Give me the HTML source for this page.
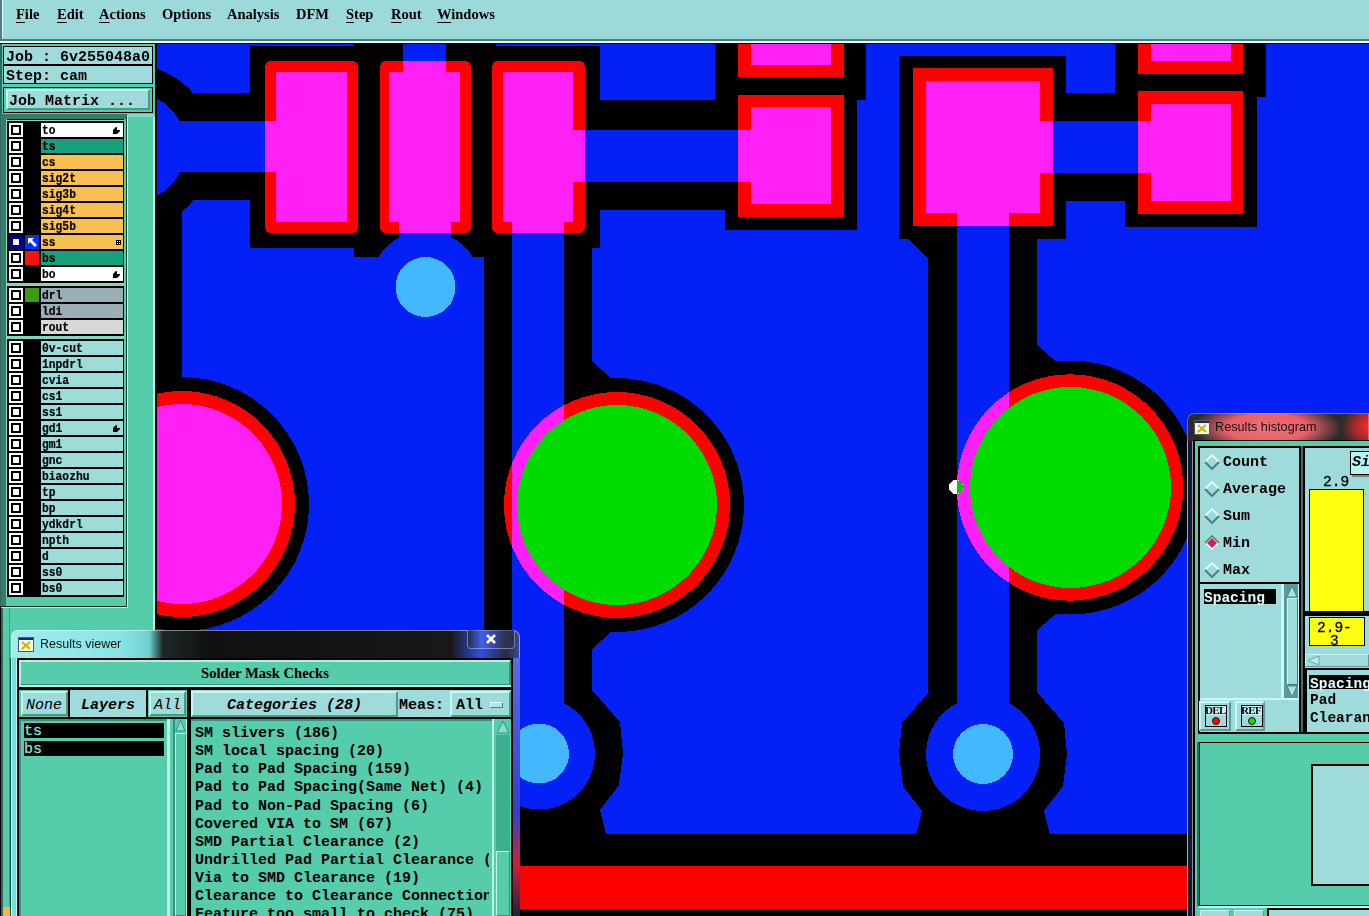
<!DOCTYPE html>
<html><head><meta charset="utf-8"><style>
html,body{margin:0;padding:0;width:1369px;height:916px;overflow:hidden;background:#000;position:relative}
div{box-sizing:content-box}
</style></head><body>
<div style="position:absolute;left:0px;top:0px;width:1369px;height:39px;background:#9cdada;"></div>
<div style="position:absolute;left:0px;top:0px;width:2px;height:44px;background:#4f8080;"></div>
<div style="position:absolute;left:2px;top:0px;width:1px;height:39px;background:#e8ffff;"></div>
<div style="position:absolute;left:0px;top:39px;width:1369px;height:2px;background:#4c7c7a;"></div>
<div style="position:absolute;left:0px;top:41px;width:1369px;height:2px;background:#f0ffff;"></div>
<div style="position:absolute;left:0px;top:43px;width:1369px;height:1px;background:#000;"></div>
<div style="position:absolute;left:16px;top:7px;font:bold 14.5px 'Liberation Serif', serif;color:#000;white-space:pre;line-height:1;"><span style="text-decoration:underline;text-underline-offset:3px">F</span>ile</div>
<div style="position:absolute;left:57px;top:7px;font:bold 14.5px 'Liberation Serif', serif;color:#000;white-space:pre;line-height:1;"><span style="text-decoration:underline;text-underline-offset:3px">E</span>dit</div>
<div style="position:absolute;left:99px;top:7px;font:bold 14.5px 'Liberation Serif', serif;color:#000;white-space:pre;line-height:1;"><span style="text-decoration:underline;text-underline-offset:3px">A</span>ctions</div>
<div style="position:absolute;left:162px;top:7px;font:bold 14.5px 'Liberation Serif', serif;color:#000;white-space:pre;line-height:1;">Options</div>
<div style="position:absolute;left:227px;top:7px;font:bold 14.5px 'Liberation Serif', serif;color:#000;white-space:pre;line-height:1;">Analysis</div>
<div style="position:absolute;left:296px;top:7px;font:bold 14.5px 'Liberation Serif', serif;color:#000;white-space:pre;line-height:1;">DFM</div>
<div style="position:absolute;left:346px;top:7px;font:bold 14.5px 'Liberation Serif', serif;color:#000;white-space:pre;line-height:1;"><span style="text-decoration:underline;text-underline-offset:3px">S</span>tep</div>
<div style="position:absolute;left:391px;top:7px;font:bold 14.5px 'Liberation Serif', serif;color:#000;white-space:pre;line-height:1;"><span style="text-decoration:underline;text-underline-offset:3px">R</span>out</div>
<div style="position:absolute;left:437px;top:7px;font:bold 14.5px 'Liberation Serif', serif;color:#000;white-space:pre;line-height:1;"><span style="text-decoration:underline;text-underline-offset:3px">W</span>indows</div>
<div style="position:absolute;left:0px;top:44px;width:156px;height:872px;background:#55cdab;"></div>
<div style="position:absolute;left:0px;top:44px;width:2px;height:872px;background:#2f6a60;"></div>
<div style="position:absolute;left:3px;top:46px;width:150px;height:38px;background:#000;"></div>
<div style="position:absolute;left:4px;top:47px;width:148px;height:17px;background:#9edbda;"></div>
<div style="position:absolute;left:4px;top:66px;width:148px;height:17px;background:#9edbda;"></div>
<div style="position:absolute;left:6px;top:50px;font:bold 15px 'Liberation Mono', monospace;color:#000;white-space:pre;line-height:1;">Job : 6v255048a0</div>
<div style="position:absolute;left:6px;top:69px;font:bold 15px 'Liberation Mono', monospace;color:#000;white-space:pre;line-height:1;">Step: cam</div>
<div style="position:absolute;left:3px;top:87px;width:150px;height:26px;background:#000;"></div>
<div style="position:absolute;left:4px;top:88px;width:148px;height:24px;background:#55cdab;"></div>
<div style="position:absolute;left:6px;top:89px;width:140px;height:17px;background:#9edbda;border:2px solid;border-color:#c8f8f4 #4a9a8a #4a9a8a #c8f8f4;"></div>
<div style="position:absolute;left:9px;top:94px;font:bold 15px 'Liberation Mono', monospace;color:#000;white-space:pre;line-height:1;">Job Matrix ...</div>
<div style="position:absolute;left:1px;top:114px;width:126px;height:5px;background:#3a7a6a;"></div>
<div style="position:absolute;left:127px;top:114px;width:28px;height:3px;background:#7ed8c8;"></div>
<div style="position:absolute;left:1px;top:119px;width:5px;height:487px;background:#3a7a6a;"></div>
<div style="position:absolute;left:0px;top:606px;width:3px;height:310px;background:#2f6a60;"></div>
<div style="position:absolute;left:0px;top:606px;width:1px;height:310px;background:#000;"></div>
<div style="position:absolute;left:9px;top:608px;width:1px;height:308px;background:#3f9a80;"></div>
<div style="position:absolute;left:6px;top:119px;width:1px;height:478px;background:#80d8c0;"></div>
<div style="position:absolute;left:7px;top:119px;width:117px;height:478px;background:#000;"></div>
<div style="position:absolute;left:124px;top:119px;width:2px;height:478px;background:#55cdab;"></div>
<div style="position:absolute;left:126px;top:117px;width:1px;height:490px;background:#1a3a30;"></div>
<div style="position:absolute;left:127px;top:117px;width:1px;height:490px;background:#c8f8f0;"></div>
<div style="position:absolute;left:153px;top:117px;width:2px;height:799px;background:#b8f0e0;"></div>
<div style="position:absolute;left:155px;top:44px;width:1px;height:872px;background:#000;"></div>
<div style="position:absolute;left:7px;top:120px;width:117px;height:1px;background:#80d8c0;"></div>
<div style="position:absolute;left:7px;top:283px;width:117px;height:3px;background:#80d8c0;"></div>
<div style="position:absolute;left:7px;top:336px;width:117px;height:3px;background:#80d8c0;"></div>
<div style="position:absolute;left:9px;top:123px;width:14px;height:14px;background:#fff;"></div>
<div style="position:absolute;left:11px;top:125px;width:10px;height:10px;background:#000;"></div>
<div style="position:absolute;left:13px;top:127px;width:6px;height:6px;background:#fff;"></div>
<div style="position:absolute;left:41px;top:123px;width:82px;height:14px;background:#ffffff;"></div>
<div style="position:absolute;left:42px;top:123.5px;font:bold 13px 'Liberation Mono', monospace;color:#000;white-space:pre;line-height:1;transform:scaleX(0.87);transform-origin:0 0;-webkit-text-stroke:0.2px #000">to</div>
<svg style="position:absolute;left:113px;top:127px" width="8" height="8"><path d="M0,3 L2,1 L3,0 L4,0 L4,3 L7,3 L7,4 L4,7 L0,7 Z" fill="#000"/></svg>
<div style="position:absolute;left:9px;top:139px;width:14px;height:14px;background:#fff;"></div>
<div style="position:absolute;left:11px;top:141px;width:10px;height:10px;background:#000;"></div>
<div style="position:absolute;left:13px;top:143px;width:6px;height:6px;background:#fff;"></div>
<div style="position:absolute;left:41px;top:139px;width:82px;height:14px;background:#17a07c;"></div>
<div style="position:absolute;left:42px;top:139.5px;font:bold 13px 'Liberation Mono', monospace;color:#000;white-space:pre;line-height:1;transform:scaleX(0.87);transform-origin:0 0;-webkit-text-stroke:0.2px #000">ts</div>
<div style="position:absolute;left:9px;top:155px;width:14px;height:14px;background:#fff;"></div>
<div style="position:absolute;left:11px;top:157px;width:10px;height:10px;background:#000;"></div>
<div style="position:absolute;left:13px;top:159px;width:6px;height:6px;background:#fff;"></div>
<div style="position:absolute;left:41px;top:155px;width:82px;height:14px;background:#f8c050;"></div>
<div style="position:absolute;left:42px;top:155.5px;font:bold 13px 'Liberation Mono', monospace;color:#000;white-space:pre;line-height:1;transform:scaleX(0.87);transform-origin:0 0;-webkit-text-stroke:0.2px #000">cs</div>
<div style="position:absolute;left:9px;top:171px;width:14px;height:14px;background:#fff;"></div>
<div style="position:absolute;left:11px;top:173px;width:10px;height:10px;background:#000;"></div>
<div style="position:absolute;left:13px;top:175px;width:6px;height:6px;background:#fff;"></div>
<div style="position:absolute;left:41px;top:171px;width:82px;height:14px;background:#f8c050;"></div>
<div style="position:absolute;left:42px;top:171.5px;font:bold 13px 'Liberation Mono', monospace;color:#000;white-space:pre;line-height:1;transform:scaleX(0.87);transform-origin:0 0;-webkit-text-stroke:0.2px #000">sig2t</div>
<div style="position:absolute;left:9px;top:187px;width:14px;height:14px;background:#fff;"></div>
<div style="position:absolute;left:11px;top:189px;width:10px;height:10px;background:#000;"></div>
<div style="position:absolute;left:13px;top:191px;width:6px;height:6px;background:#fff;"></div>
<div style="position:absolute;left:41px;top:187px;width:82px;height:14px;background:#f8c050;"></div>
<div style="position:absolute;left:42px;top:187.5px;font:bold 13px 'Liberation Mono', monospace;color:#000;white-space:pre;line-height:1;transform:scaleX(0.87);transform-origin:0 0;-webkit-text-stroke:0.2px #000">sig3b</div>
<div style="position:absolute;left:9px;top:203px;width:14px;height:14px;background:#fff;"></div>
<div style="position:absolute;left:11px;top:205px;width:10px;height:10px;background:#000;"></div>
<div style="position:absolute;left:13px;top:207px;width:6px;height:6px;background:#fff;"></div>
<div style="position:absolute;left:41px;top:203px;width:82px;height:14px;background:#f8c050;"></div>
<div style="position:absolute;left:42px;top:203.5px;font:bold 13px 'Liberation Mono', monospace;color:#000;white-space:pre;line-height:1;transform:scaleX(0.87);transform-origin:0 0;-webkit-text-stroke:0.2px #000">sig4t</div>
<div style="position:absolute;left:9px;top:219px;width:14px;height:14px;background:#fff;"></div>
<div style="position:absolute;left:11px;top:221px;width:10px;height:10px;background:#000;"></div>
<div style="position:absolute;left:13px;top:223px;width:6px;height:6px;background:#fff;"></div>
<div style="position:absolute;left:41px;top:219px;width:82px;height:14px;background:#f8c050;"></div>
<div style="position:absolute;left:42px;top:219.5px;font:bold 13px 'Liberation Mono', monospace;color:#000;white-space:pre;line-height:1;transform:scaleX(0.87);transform-origin:0 0;-webkit-text-stroke:0.2px #000">sig5b</div>
<div style="position:absolute;left:9px;top:235px;width:14px;height:14px;background:#000088;"></div>
<div style="position:absolute;left:13px;top:239px;width:6px;height:6px;background:#fff;"></div>
<div style="position:absolute;left:25px;top:235px;width:14px;height:14px;background:#0a30ff;"></div>
<svg style="position:absolute;left:25px;top:235px" width="14" height="14"><path d="M3,3 L9,3 L7,5 L12,10 L10,12 L5,7 L3,9 Z" fill="#fff"/></svg>
<div style="position:absolute;left:41px;top:235px;width:82px;height:14px;background:#f8c050;"></div>
<div style="position:absolute;left:42px;top:235.5px;font:bold 13px 'Liberation Mono', monospace;color:#000;white-space:pre;line-height:1;transform:scaleX(0.87);transform-origin:0 0;-webkit-text-stroke:0.2px #000">ss</div>
<svg style="position:absolute;left:116px;top:240px" width="5" height="5" shape-rendering="crispEdges"><rect width="5" height="5" fill="#000"/><rect x="1" y="1" width="1" height="1" fill="#fff"/><rect x="3" y="1" width="1" height="1" fill="#fff"/><rect x="1" y="3" width="1" height="1" fill="#fff"/><rect x="3" y="3" width="1" height="1" fill="#fff"/></svg>
<div style="position:absolute;left:9px;top:251px;width:14px;height:14px;background:#fff;"></div>
<div style="position:absolute;left:11px;top:253px;width:10px;height:10px;background:#000;"></div>
<div style="position:absolute;left:13px;top:255px;width:6px;height:6px;background:#fff;"></div>
<div style="position:absolute;left:25px;top:251px;width:14px;height:14px;background:#ff1010;"></div>
<div style="position:absolute;left:41px;top:251px;width:82px;height:14px;background:#17a07c;"></div>
<div style="position:absolute;left:42px;top:251.5px;font:bold 13px 'Liberation Mono', monospace;color:#000;white-space:pre;line-height:1;transform:scaleX(0.87);transform-origin:0 0;-webkit-text-stroke:0.2px #000">bs</div>
<div style="position:absolute;left:9px;top:267px;width:14px;height:14px;background:#fff;"></div>
<div style="position:absolute;left:11px;top:269px;width:10px;height:10px;background:#000;"></div>
<div style="position:absolute;left:13px;top:271px;width:6px;height:6px;background:#fff;"></div>
<div style="position:absolute;left:41px;top:267px;width:82px;height:14px;background:#ffffff;"></div>
<div style="position:absolute;left:42px;top:267.5px;font:bold 13px 'Liberation Mono', monospace;color:#000;white-space:pre;line-height:1;transform:scaleX(0.87);transform-origin:0 0;-webkit-text-stroke:0.2px #000">bo</div>
<svg style="position:absolute;left:113px;top:271px" width="8" height="8"><path d="M0,3 L2,1 L3,0 L4,0 L4,3 L7,3 L7,4 L4,7 L0,7 Z" fill="#000"/></svg>
<div style="position:absolute;left:9px;top:288px;width:14px;height:14px;background:#fff;"></div>
<div style="position:absolute;left:11px;top:290px;width:10px;height:10px;background:#000;"></div>
<div style="position:absolute;left:13px;top:292px;width:6px;height:6px;background:#fff;"></div>
<div style="position:absolute;left:25px;top:288px;width:14px;height:14px;background:#3c9c10;"></div>
<div style="position:absolute;left:41px;top:288px;width:82px;height:14px;background:#9aaeb6;"></div>
<div style="position:absolute;left:42px;top:288.5px;font:bold 13px 'Liberation Mono', monospace;color:#000;white-space:pre;line-height:1;transform:scaleX(0.87);transform-origin:0 0;-webkit-text-stroke:0.2px #000">drl</div>
<div style="position:absolute;left:9px;top:304px;width:14px;height:14px;background:#fff;"></div>
<div style="position:absolute;left:11px;top:306px;width:10px;height:10px;background:#000;"></div>
<div style="position:absolute;left:13px;top:308px;width:6px;height:6px;background:#fff;"></div>
<div style="position:absolute;left:41px;top:304px;width:82px;height:14px;background:#9aaeb6;"></div>
<div style="position:absolute;left:42px;top:304.5px;font:bold 13px 'Liberation Mono', monospace;color:#000;white-space:pre;line-height:1;transform:scaleX(0.87);transform-origin:0 0;-webkit-text-stroke:0.2px #000">ldi</div>
<div style="position:absolute;left:9px;top:320px;width:14px;height:14px;background:#fff;"></div>
<div style="position:absolute;left:11px;top:322px;width:10px;height:10px;background:#000;"></div>
<div style="position:absolute;left:13px;top:324px;width:6px;height:6px;background:#fff;"></div>
<div style="position:absolute;left:41px;top:320px;width:82px;height:14px;background:#d8d8d8;"></div>
<div style="position:absolute;left:42px;top:320.5px;font:bold 13px 'Liberation Mono', monospace;color:#000;white-space:pre;line-height:1;transform:scaleX(0.87);transform-origin:0 0;-webkit-text-stroke:0.2px #000">rout</div>
<div style="position:absolute;left:9px;top:341px;width:14px;height:14px;background:#fff;"></div>
<div style="position:absolute;left:11px;top:343px;width:10px;height:10px;background:#000;"></div>
<div style="position:absolute;left:13px;top:345px;width:6px;height:6px;background:#fff;"></div>
<div style="position:absolute;left:41px;top:341px;width:82px;height:14px;background:#9edcda;"></div>
<div style="position:absolute;left:42px;top:341.5px;font:bold 13px 'Liberation Mono', monospace;color:#000;white-space:pre;line-height:1;transform:scaleX(0.87);transform-origin:0 0;-webkit-text-stroke:0.2px #000">0v-cut</div>
<div style="position:absolute;left:9px;top:357px;width:14px;height:14px;background:#fff;"></div>
<div style="position:absolute;left:11px;top:359px;width:10px;height:10px;background:#000;"></div>
<div style="position:absolute;left:13px;top:361px;width:6px;height:6px;background:#fff;"></div>
<div style="position:absolute;left:41px;top:357px;width:82px;height:14px;background:#9edcda;"></div>
<div style="position:absolute;left:42px;top:357.5px;font:bold 13px 'Liberation Mono', monospace;color:#000;white-space:pre;line-height:1;transform:scaleX(0.87);transform-origin:0 0;-webkit-text-stroke:0.2px #000">1npdrl</div>
<div style="position:absolute;left:9px;top:373px;width:14px;height:14px;background:#fff;"></div>
<div style="position:absolute;left:11px;top:375px;width:10px;height:10px;background:#000;"></div>
<div style="position:absolute;left:13px;top:377px;width:6px;height:6px;background:#fff;"></div>
<div style="position:absolute;left:41px;top:373px;width:82px;height:14px;background:#9edcda;"></div>
<div style="position:absolute;left:42px;top:373.5px;font:bold 13px 'Liberation Mono', monospace;color:#000;white-space:pre;line-height:1;transform:scaleX(0.87);transform-origin:0 0;-webkit-text-stroke:0.2px #000">cvia</div>
<div style="position:absolute;left:9px;top:389px;width:14px;height:14px;background:#fff;"></div>
<div style="position:absolute;left:11px;top:391px;width:10px;height:10px;background:#000;"></div>
<div style="position:absolute;left:13px;top:393px;width:6px;height:6px;background:#fff;"></div>
<div style="position:absolute;left:41px;top:389px;width:82px;height:14px;background:#9edcda;"></div>
<div style="position:absolute;left:42px;top:389.5px;font:bold 13px 'Liberation Mono', monospace;color:#000;white-space:pre;line-height:1;transform:scaleX(0.87);transform-origin:0 0;-webkit-text-stroke:0.2px #000">cs1</div>
<div style="position:absolute;left:9px;top:405px;width:14px;height:14px;background:#fff;"></div>
<div style="position:absolute;left:11px;top:407px;width:10px;height:10px;background:#000;"></div>
<div style="position:absolute;left:13px;top:409px;width:6px;height:6px;background:#fff;"></div>
<div style="position:absolute;left:41px;top:405px;width:82px;height:14px;background:#9edcda;"></div>
<div style="position:absolute;left:42px;top:405.5px;font:bold 13px 'Liberation Mono', monospace;color:#000;white-space:pre;line-height:1;transform:scaleX(0.87);transform-origin:0 0;-webkit-text-stroke:0.2px #000">ss1</div>
<div style="position:absolute;left:9px;top:421px;width:14px;height:14px;background:#fff;"></div>
<div style="position:absolute;left:11px;top:423px;width:10px;height:10px;background:#000;"></div>
<div style="position:absolute;left:13px;top:425px;width:6px;height:6px;background:#fff;"></div>
<div style="position:absolute;left:41px;top:421px;width:82px;height:14px;background:#9edcda;"></div>
<div style="position:absolute;left:42px;top:421.5px;font:bold 13px 'Liberation Mono', monospace;color:#000;white-space:pre;line-height:1;transform:scaleX(0.87);transform-origin:0 0;-webkit-text-stroke:0.2px #000">gd1</div>
<svg style="position:absolute;left:113px;top:425px" width="8" height="8"><path d="M0,3 L2,1 L3,0 L4,0 L4,3 L7,3 L7,4 L4,7 L0,7 Z" fill="#000"/></svg>
<div style="position:absolute;left:9px;top:437px;width:14px;height:14px;background:#fff;"></div>
<div style="position:absolute;left:11px;top:439px;width:10px;height:10px;background:#000;"></div>
<div style="position:absolute;left:13px;top:441px;width:6px;height:6px;background:#fff;"></div>
<div style="position:absolute;left:41px;top:437px;width:82px;height:14px;background:#9edcda;"></div>
<div style="position:absolute;left:42px;top:437.5px;font:bold 13px 'Liberation Mono', monospace;color:#000;white-space:pre;line-height:1;transform:scaleX(0.87);transform-origin:0 0;-webkit-text-stroke:0.2px #000">gm1</div>
<div style="position:absolute;left:9px;top:453px;width:14px;height:14px;background:#fff;"></div>
<div style="position:absolute;left:11px;top:455px;width:10px;height:10px;background:#000;"></div>
<div style="position:absolute;left:13px;top:457px;width:6px;height:6px;background:#fff;"></div>
<div style="position:absolute;left:41px;top:453px;width:82px;height:14px;background:#9edcda;"></div>
<div style="position:absolute;left:42px;top:453.5px;font:bold 13px 'Liberation Mono', monospace;color:#000;white-space:pre;line-height:1;transform:scaleX(0.87);transform-origin:0 0;-webkit-text-stroke:0.2px #000">gnc</div>
<div style="position:absolute;left:9px;top:469px;width:14px;height:14px;background:#fff;"></div>
<div style="position:absolute;left:11px;top:471px;width:10px;height:10px;background:#000;"></div>
<div style="position:absolute;left:13px;top:473px;width:6px;height:6px;background:#fff;"></div>
<div style="position:absolute;left:41px;top:469px;width:82px;height:14px;background:#9edcda;"></div>
<div style="position:absolute;left:42px;top:469.5px;font:bold 13px 'Liberation Mono', monospace;color:#000;white-space:pre;line-height:1;transform:scaleX(0.87);transform-origin:0 0;-webkit-text-stroke:0.2px #000">biaozhu</div>
<div style="position:absolute;left:9px;top:485px;width:14px;height:14px;background:#fff;"></div>
<div style="position:absolute;left:11px;top:487px;width:10px;height:10px;background:#000;"></div>
<div style="position:absolute;left:13px;top:489px;width:6px;height:6px;background:#fff;"></div>
<div style="position:absolute;left:41px;top:485px;width:82px;height:14px;background:#9edcda;"></div>
<div style="position:absolute;left:42px;top:485.5px;font:bold 13px 'Liberation Mono', monospace;color:#000;white-space:pre;line-height:1;transform:scaleX(0.87);transform-origin:0 0;-webkit-text-stroke:0.2px #000">tp</div>
<div style="position:absolute;left:9px;top:501px;width:14px;height:14px;background:#fff;"></div>
<div style="position:absolute;left:11px;top:503px;width:10px;height:10px;background:#000;"></div>
<div style="position:absolute;left:13px;top:505px;width:6px;height:6px;background:#fff;"></div>
<div style="position:absolute;left:41px;top:501px;width:82px;height:14px;background:#9edcda;"></div>
<div style="position:absolute;left:42px;top:501.5px;font:bold 13px 'Liberation Mono', monospace;color:#000;white-space:pre;line-height:1;transform:scaleX(0.87);transform-origin:0 0;-webkit-text-stroke:0.2px #000">bp</div>
<div style="position:absolute;left:9px;top:517px;width:14px;height:14px;background:#fff;"></div>
<div style="position:absolute;left:11px;top:519px;width:10px;height:10px;background:#000;"></div>
<div style="position:absolute;left:13px;top:521px;width:6px;height:6px;background:#fff;"></div>
<div style="position:absolute;left:41px;top:517px;width:82px;height:14px;background:#9edcda;"></div>
<div style="position:absolute;left:42px;top:517.5px;font:bold 13px 'Liberation Mono', monospace;color:#000;white-space:pre;line-height:1;transform:scaleX(0.87);transform-origin:0 0;-webkit-text-stroke:0.2px #000">ydkdrl</div>
<div style="position:absolute;left:9px;top:533px;width:14px;height:14px;background:#fff;"></div>
<div style="position:absolute;left:11px;top:535px;width:10px;height:10px;background:#000;"></div>
<div style="position:absolute;left:13px;top:537px;width:6px;height:6px;background:#fff;"></div>
<div style="position:absolute;left:41px;top:533px;width:82px;height:14px;background:#9edcda;"></div>
<div style="position:absolute;left:42px;top:533.5px;font:bold 13px 'Liberation Mono', monospace;color:#000;white-space:pre;line-height:1;transform:scaleX(0.87);transform-origin:0 0;-webkit-text-stroke:0.2px #000">npth</div>
<div style="position:absolute;left:9px;top:549px;width:14px;height:14px;background:#fff;"></div>
<div style="position:absolute;left:11px;top:551px;width:10px;height:10px;background:#000;"></div>
<div style="position:absolute;left:13px;top:553px;width:6px;height:6px;background:#fff;"></div>
<div style="position:absolute;left:41px;top:549px;width:82px;height:14px;background:#9edcda;"></div>
<div style="position:absolute;left:42px;top:549.5px;font:bold 13px 'Liberation Mono', monospace;color:#000;white-space:pre;line-height:1;transform:scaleX(0.87);transform-origin:0 0;-webkit-text-stroke:0.2px #000">d</div>
<div style="position:absolute;left:9px;top:565px;width:14px;height:14px;background:#fff;"></div>
<div style="position:absolute;left:11px;top:567px;width:10px;height:10px;background:#000;"></div>
<div style="position:absolute;left:13px;top:569px;width:6px;height:6px;background:#fff;"></div>
<div style="position:absolute;left:41px;top:565px;width:82px;height:14px;background:#9edcda;"></div>
<div style="position:absolute;left:42px;top:565.5px;font:bold 13px 'Liberation Mono', monospace;color:#000;white-space:pre;line-height:1;transform:scaleX(0.87);transform-origin:0 0;-webkit-text-stroke:0.2px #000">ss0</div>
<div style="position:absolute;left:9px;top:581px;width:14px;height:14px;background:#fff;"></div>
<div style="position:absolute;left:11px;top:583px;width:10px;height:10px;background:#000;"></div>
<div style="position:absolute;left:13px;top:585px;width:6px;height:6px;background:#fff;"></div>
<div style="position:absolute;left:41px;top:581px;width:82px;height:14px;background:#9edcda;"></div>
<div style="position:absolute;left:42px;top:581.5px;font:bold 13px 'Liberation Mono', monospace;color:#000;white-space:pre;line-height:1;transform:scaleX(0.87);transform-origin:0 0;-webkit-text-stroke:0.2px #000">bs0</div>
<div style="position:absolute;left:1px;top:606px;width:126px;height:1px;background:#102820;"></div>
<div style="position:absolute;left:1px;top:607px;width:127px;height:1px;background:#a8f4e4;"></div>
<div style="position:absolute;left:3px;top:907px;width:7px;height:9px;background:#f0b840;"></div>
<svg width="1213" height="872" viewBox="156 44 1213 872" style="position:absolute;left:156px;top:44px;display:block" shape-rendering="crispEdges">
<rect x="156" y="44" width="1213" height="872" fill="#0320f6" />
<rect x="250" y="46" width="350" height="202" fill="#000" />
<rect x="354" y="44" width="142" height="2" fill="#000" />
<circle cx="130.6" cy="147" r="82.5" fill="#000"/>
<rect x="130" y="93" width="120" height="107" fill="#000" />
<circle cx="182" cy="504" r="127" fill="#000"/>
<rect x="156" y="147" width="26" height="253" fill="#000" />
<rect x="354" y="248" width="158" height="9" fill="#000" />
<rect x="484" y="257" width="28" height="577" fill="#000" />
<rect x="564" y="248" width="28" height="113" fill="#000" />
<polygon points="564,361 592,361 612,379 612,400 564,400" fill="#000"/>
<circle cx="617" cy="505" r="127" fill="#000"/>
<rect x="564" y="649" width="28" height="42" fill="#000" />
<polygon points="564,610 612,610 612,631 592,649 564,649" fill="#000"/>
<polygon points="485,691 593,691 620,722 623,753 619,785 600,810 606,834 472,834 478,810 459,785 455,753 458,722" fill="#000"/>
<rect x="600" y="100" width="257" height="110" fill="#000" />
<rect x="715" y="44" width="151" height="56" fill="#000" />
<rect x="725" y="210" width="132" height="20" fill="#000" />
<rect x="899" y="56" width="167" height="183" fill="#000" />
<polygon points="908,239 928,239 928,258" fill="#000"/>
<rect x="928" y="239" width="29" height="453" fill="#000" />
<rect x="1009" y="239" width="28" height="106" fill="#000" />
<polygon points="1009,345 1037,345 1058,363 1058,390 1009,390" fill="#000"/>
<circle cx="1070.5" cy="487.5" r="127" fill="#000"/>
<rect x="1009" y="630" width="28" height="62" fill="#000" />
<polygon points="1009,590 1058,590 1058,612 1037,630 1009,630" fill="#000"/>
<polygon points="929,692 1037,692 1064,723 1067,754 1063,786 1044,811 1050,835 916,835 922,811 903,786 899,754 902,723" fill="#000"/>
<rect x="1066" y="93" width="72" height="108" fill="#000" />
<rect x="1115" y="44" width="23" height="49" fill="#000" />
<rect x="1125" y="44" width="132" height="183" fill="#000" />
<rect x="1243" y="44" width="23" height="53" fill="#000" />
<rect x="156" y="834" width="1213" height="82" fill="#000" />
<circle cx="130.6" cy="147" r="55.4" fill="#0320f6"/>
<rect x="130" y="121" width="146" height="51" fill="#0320f6" />
<rect x="276" y="72" width="71" height="150" fill="#0320f6" />
<rect x="389" y="72" width="71" height="150" fill="#0320f6" />
<rect x="403" y="44" width="43" height="28" fill="#0320f6" />
<rect x="399" y="222" width="52" height="38" fill="#0320f6" />
<circle cx="425.5" cy="287" r="56" fill="#0320f6"/>
<rect x="503" y="72" width="70" height="150" fill="#0320f6" />
<rect x="573" y="130" width="178" height="52" fill="#0320f6" />
<rect x="512" y="222" width="52" height="532" fill="#0320f6" />
<rect x="751" y="107" width="80" height="97" fill="#0320f6" />
<rect x="751" y="44" width="80" height="21" fill="#0320f6" />
<rect x="926" y="81" width="114" height="132" fill="#0320f6" />
<rect x="1040" y="121" width="111" height="52" fill="#0320f6" />
<rect x="957" y="213" width="52" height="541" fill="#0320f6" />
<rect x="1151" y="104" width="80" height="97" fill="#0320f6" />
<rect x="1151" y="44" width="80" height="17" fill="#0320f6" />
<circle cx="182" cy="504" r="100" fill="#0320f6"/>
<circle cx="539" cy="753.5" r="56" fill="#0320f6"/>
<circle cx="983" cy="754" r="57" fill="#0320f6"/>
<g style="mix-blend-mode:lighten">
<rect x="265" y="61" width="93" height="172" fill="#ff0000" rx="6"/>
<rect x="380" y="61" width="91" height="172" fill="#ff0000" rx="6"/>
<rect x="492" y="61" width="93" height="172" fill="#ff0000" rx="6"/>
<rect x="738" y="95" width="106" height="122" fill="#ff0000" />
<rect x="738" y="44" width="106" height="33" fill="#ff0000" />
<rect x="913" y="68" width="140" height="158" fill="#ff0000" />
<rect x="1138" y="91" width="105" height="123" fill="#ff0000" />
<rect x="1138" y="44" width="105" height="30" fill="#ff0000" />
<circle cx="182" cy="504" r="113" fill="#ff0000"/>
<circle cx="617" cy="505" r="113" fill="#ff0000"/>
<circle cx="1070" cy="487.5" r="113.2" fill="#ff0000"/>
<rect x="156" y="866" width="1213" height="43" fill="#ff0000" />
</g>
<circle cx="425.5" cy="287" r="30" fill="#44b8ff"/>
<circle cx="539" cy="753.5" r="30" fill="#44b8ff"/>
<circle cx="983" cy="754" r="30" fill="#44b8ff"/>
<circle cx="617" cy="505" r="100" fill="#00dc00"/>
<circle cx="1070.5" cy="487.5" r="100.5" fill="#00dc00"/>
<circle cx="956" cy="487" r="7" fill="#fff"/><path d="M957,480.1 A7,7 0 0 1 957,493.9 Z" fill="#00c800"/>
<rect x="156" y="44" width="1" height="872" fill="#000" />
</svg>
<div style="position:absolute;left:11px;top:630px;width:509px;height:286px;border-radius:7px 7px 0 0;background:linear-gradient(90deg,#a0eeee 0px,#88e4e4 110px,#70d0d0 138px,#1c2828 152px,#101010 200px,#181818 440px,#3050e0 470px,#2a2a3a 495px,#3a4aa0 509px);box-shadow:inset 0 0 0 1px rgba(255,255,255,0.45)"></div>
<div style="position:absolute;left:10px;top:658px;width:8px;height:258px;background:linear-gradient(90deg,#1a5040 0px,#1a5040 1px,#d0ffff 1px,#d0ffff 2px,#72e2e2 2px,#68e0e0 6px,#c0fafa 6px,#c0fafa 7px,#103030 7px);"></div>
<div style="position:absolute;left:512px;top:658px;width:8px;height:258px;background:linear-gradient(180deg,#5a6ae8,#3040d0 60%,#d02040 80%,#202040);"></div>
<svg style="position:absolute;left:18px;top:637px" width="16" height="15"><rect x="0.5" y="0.5" width="15" height="14" fill="#f8f8e8" stroke="#555"/><rect x="1" y="1" width="14" height="2" fill="#202080"/><path d="M4,5 L12,12 M12,5 L4,12" stroke="#c8b800" stroke-width="2"/></svg>
<div style="position:absolute;left:40px;top:638px;font:12.5px 'Liberation Sans', sans-serif;color:#111;white-space:pre;line-height:1;">Results viewer</div>
<div style="position:absolute;left:467px;top:630px;width:46px;height:18px;border:1px solid rgba(200,200,255,0.5);border-top:none;border-radius:0 0 4px 4px;background:linear-gradient(90deg,rgba(40,40,40,0.6),rgba(80,110,255,0.5) 30%,rgba(40,40,50,0.6))"></div>
<svg style="position:absolute;left:485px;top:633px" width="12" height="12"><path d="M2,2 L10,10 M10,2 L2,10" stroke="#fff" stroke-width="2.6"/></svg>
<div style="position:absolute;left:18px;top:658px;width:495px;height:258px;background:#000;"></div>
<div style="position:absolute;left:19px;top:660px;width:492px;height:256px;background:#55cdab;"></div>
<div style="position:absolute;left:19px;top:660px;width:488px;height:22px;background:#55cdab;border:2px solid;border-color:#b4f0e6 #3c9080 #3c9080 #b4f0e6;"></div>
<div style="position:absolute;left:19px;top:666px;font:bold 14.6px 'Liberation Serif', serif;color:#000;white-space:pre;line-height:1;width:492px;text-align:center">Solder Mask Checks</div>
<div style="position:absolute;left:19px;top:685px;width:492px;height:2px;background:#b4f0e6;"></div>
<div style="position:absolute;left:19px;top:687px;width:492px;height:3px;background:#000;"></div>
<div style="position:absolute;left:19px;top:690px;width:492px;height:27px;background:#9edbda;"></div>
<div style="position:absolute;left:19px;top:690px;width:49px;height:27px;background:#55cdab;"></div>
<div style="position:absolute;left:21px;top:691px;width:43px;height:21px;background:#9edbda;border:2px solid;border-color:#c8f8f4 #4a9a8a #4a9a8a #c8f8f4;"></div>
<div style="position:absolute;left:26px;top:698px;font:italic 15px 'Liberation Mono', monospace;color:#000;white-space:pre;line-height:1;">None</div>
<div style="position:absolute;left:68px;top:690px;width:2px;height:27px;background:#000;"></div>
<div style="position:absolute;left:81px;top:698px;font:bold italic 15px 'Liberation Mono', monospace;color:#000;white-space:pre;line-height:1;">Layers</div>
<div style="position:absolute;left:146px;top:690px;width:2px;height:27px;background:#000;"></div>
<div style="position:absolute;left:148px;top:690px;width:39px;height:27px;background:#55cdab;"></div>
<div style="position:absolute;left:149px;top:691px;width:33px;height:21px;background:#9edbda;border:2px solid;border-color:#c8f8f4 #4a9a8a #4a9a8a #c8f8f4;"></div>
<div style="position:absolute;left:154px;top:698px;font:italic 15px 'Liberation Mono', monospace;color:#000;white-space:pre;line-height:1;">All</div>
<div style="position:absolute;left:187px;top:690px;width:4px;height:226px;background:#000;"></div>
<div style="position:absolute;left:191px;top:690px;width:320px;height:27px;background:#9edbda;"></div>
<div style="position:absolute;left:191px;top:691px;width:203px;height:22px;background:#9edbda;border:2px solid;border-color:#c8f8f4 #4a9a8a #4a9a8a #c8f8f4;"></div>
<div style="position:absolute;left:227px;top:698px;font:bold italic 15px 'Liberation Mono', monospace;color:#000;white-space:pre;line-height:1;">Categories (28)</div>
<div style="position:absolute;left:399px;top:698px;font:bold 15px 'Liberation Mono', monospace;color:#000;white-space:pre;line-height:1;">Meas:</div>
<div style="position:absolute;left:450px;top:691px;width:57px;height:22px;background:#9edbda;border:2px solid;border-color:#c8f8f4 #4a9a8a #4a9a8a #c8f8f4;"></div>
<div style="position:absolute;left:456px;top:698px;font:bold 15px 'Liberation Mono', monospace;color:#000;white-space:pre;line-height:1;">All</div>
<div style="position:absolute;left:490px;top:702px;width:11px;height:4px;background:#b0e8e8;border:1px solid;border-color:#e8ffff #3a8a7a #3a8a7a #e8ffff;"></div>
<div style="position:absolute;left:19px;top:717px;width:172px;height:2px;background:#000;"></div>
<div style="position:absolute;left:191px;top:717px;width:320px;height:2px;background:#000;"></div>
<div style="position:absolute;left:19px;top:719px;width:168px;height:197px;background:#55cdab;"></div>
<div style="position:absolute;left:19px;top:719px;width:150px;height:2px;background:#3a9080;"></div>
<div style="position:absolute;left:19px;top:719px;width:2px;height:197px;background:#3a9080;"></div>
<div style="position:absolute;left:167px;top:719px;width:3px;height:197px;background:#b8f4e8;"></div>
<div style="position:absolute;left:173px;top:719px;width:2px;height:197px;background:#3a9080;"></div>
<div style="position:absolute;left:186px;top:719px;width:1px;height:197px;background:#b8f4e8;"></div>
<svg style="position:absolute;left:175px;top:719px" width="11" height="14"><polygon points="5.5,1 1,12 10,12" fill="#7fe0d0" stroke="#3a9080"/></svg>
<div style="position:absolute;left:175px;top:733px;width:9px;height:181px;background:#55cdab;border:1px solid;border-color:#c0f8ec #3a9080 #3a9080 #c0f8ec;"></div>
<div style="position:absolute;left:24px;top:723px;width:140px;height:15px;background:#000;"></div>
<div style="position:absolute;left:24px;top:741px;width:140px;height:15px;background:#000;"></div>
<div style="position:absolute;left:24px;top:724px;font:15px 'Liberation Mono', monospace;color:#8ee8d0;white-space:pre;line-height:1;-webkit-text-stroke:0.25px #8ee8d0">ts</div>
<div style="position:absolute;left:24px;top:742px;font:15px 'Liberation Mono', monospace;color:#8ee8d0;white-space:pre;line-height:1;-webkit-text-stroke:0.25px #8ee8d0">bs</div>
<div style="position:absolute;left:191px;top:719px;width:320px;height:2px;background:#3a9080;"></div>
<div style="position:absolute;left:492px;top:719px;width:2px;height:197px;background:#b8f4e8;"></div>
<div style="position:absolute;left:494px;top:719px;width:17px;height:197px;background:#55cdab;"></div>
<div style="position:absolute;left:496px;top:735px;width:14px;height:116px;background:#3fae8e;"></div>
<svg style="position:absolute;left:496px;top:720px" width="14" height="15"><polygon points="7,1 1,13 13,13" fill="#7fe0d0" stroke="#3a9080"/></svg>
<div style="position:absolute;left:496px;top:851px;width:12px;height:63px;background:#55cdab;border:1px solid;border-color:#c0f8ec #3a9080 #3a9080 #c0f8ec;"></div>
<div style="position:absolute;left:192px;top:721px;width:297px;height:195px;overflow:hidden">
<div style="position:absolute;left:3px;top:5px;font:bold 15px 'Liberation Mono', monospace;color:#000;white-space:pre;line-height:1;">SM slivers (186)</div>
<div style="position:absolute;left:3px;top:23px;font:bold 15px 'Liberation Mono', monospace;color:#000;white-space:pre;line-height:1;">SM local spacing (20)</div>
<div style="position:absolute;left:3px;top:41px;font:bold 15px 'Liberation Mono', monospace;color:#000;white-space:pre;line-height:1;">Pad to Pad Spacing (159)</div>
<div style="position:absolute;left:3px;top:59px;font:bold 15px 'Liberation Mono', monospace;color:#000;white-space:pre;line-height:1;">Pad to Pad Spacing(Same Net) (4)</div>
<div style="position:absolute;left:3px;top:78px;font:bold 15px 'Liberation Mono', monospace;color:#000;white-space:pre;line-height:1;">Pad to Non-Pad Spacing (6)</div>
<div style="position:absolute;left:3px;top:96px;font:bold 15px 'Liberation Mono', monospace;color:#000;white-space:pre;line-height:1;">Covered VIA to SM (67)</div>
<div style="position:absolute;left:3px;top:114px;font:bold 15px 'Liberation Mono', monospace;color:#000;white-space:pre;line-height:1;">SMD Partial Clearance (2)</div>
<div style="position:absolute;left:3px;top:132px;font:bold 15px 'Liberation Mono', monospace;color:#000;white-space:pre;line-height:1;">Undrilled Pad Partial Clearance (5)</div>
<div style="position:absolute;left:3px;top:150px;font:bold 15px 'Liberation Mono', monospace;color:#000;white-space:pre;line-height:1;">Via to SMD Clearance (19)</div>
<div style="position:absolute;left:3px;top:168px;font:bold 15px 'Liberation Mono', monospace;color:#000;white-space:pre;line-height:1;">Clearance to Clearance Connection (3)</div>
<div style="position:absolute;left:3px;top:186px;font:bold 15px 'Liberation Mono', monospace;color:#000;white-space:pre;line-height:1;">Feature too small to check (75)</div>
</div>
<div style="position:absolute;left:1187px;top:413px;width:182px;height:503px;border-radius:7px 0 0 0;background:radial-gradient(ellipse 75px 26px at 80px 15px,#f47078 0%,#e86068 55%,rgba(40,40,40,0) 100%),radial-gradient(ellipse 28px 24px at 182px 14px,#ff2a2a 0%,rgba(255,40,40,0.6) 50%,rgba(40,40,40,0) 100%),#2a2a2a;box-shadow:inset 0 0 0 1px rgba(255,255,255,0.35)"></div>
<div style="position:absolute;left:1187px;top:441px;width:6px;height:475px;background:linear-gradient(90deg,#a0a8d0 0px,#a0a8d0 1px,#101838 1px,#141a30 5px,#909090 5px);"></div>
<svg style="position:absolute;left:1194px;top:420px" width="16" height="15"><rect x="0.5" y="0.5" width="15" height="14" fill="#f8f8e8" stroke="#555"/><rect x="1" y="1" width="14" height="2" fill="#202080"/><path d="M4,5 L12,12 M12,5 L4,12" stroke="#c8b800" stroke-width="2"/></svg>
<div style="position:absolute;left:1215px;top:421px;font:12.7px 'Liberation Sans', sans-serif;color:#111;white-space:pre;line-height:1;">Results histogram</div>
<div style="position:absolute;left:1193px;top:440px;width:176px;height:476px;background:#000;"></div>
<div style="position:absolute;left:1195px;top:441px;width:174px;height:475px;background:#55cdab;"></div>
<div style="position:absolute;left:1198px;top:446px;width:103px;height:288px;background:#000;"></div>
<div style="position:absolute;left:1200px;top:448px;width:99px;height:134px;background:#9edbda;"></div>
<svg style="position:absolute;left:1204px;top:454px" width="16" height="16"><path d="M1,8 L8,1 L15,8" stroke="#e0ffff" stroke-width="1.8" fill="none"/><path d="M1,8 L8,15 L15,8" stroke="#4a8080" stroke-width="2" fill="none"/></svg>
<div style="position:absolute;left:1223px;top:455px;font:bold 15px 'Liberation Mono', monospace;color:#000;white-space:pre;line-height:1;">Count</div>
<svg style="position:absolute;left:1204px;top:481px" width="16" height="16"><path d="M1,8 L8,1 L15,8" stroke="#e0ffff" stroke-width="1.8" fill="none"/><path d="M1,8 L8,15 L15,8" stroke="#4a8080" stroke-width="2" fill="none"/></svg>
<div style="position:absolute;left:1223px;top:482px;font:bold 15px 'Liberation Mono', monospace;color:#000;white-space:pre;line-height:1;">Average</div>
<svg style="position:absolute;left:1204px;top:508px" width="16" height="16"><path d="M1,8 L8,1 L15,8" stroke="#e0ffff" stroke-width="1.8" fill="none"/><path d="M1,8 L8,15 L15,8" stroke="#4a8080" stroke-width="2" fill="none"/></svg>
<div style="position:absolute;left:1223px;top:509px;font:bold 15px 'Liberation Mono', monospace;color:#000;white-space:pre;line-height:1;">Sum</div>
<svg style="position:absolute;left:1204px;top:535px" width="16" height="16"><polygon points="8,1 15,8 8,15 1,8" fill="#fff"/><polygon points="8,3 13,8 8,13 3,8" fill="#d0205a"/><path d="M1,8 L8,1 L15,8" stroke="#4a7a7a" stroke-width="1.6" fill="none"/></svg>
<div style="position:absolute;left:1223px;top:536px;font:bold 15px 'Liberation Mono', monospace;color:#000;white-space:pre;line-height:1;">Min</div>
<svg style="position:absolute;left:1204px;top:562px" width="16" height="16"><path d="M1,8 L8,1 L15,8" stroke="#e0ffff" stroke-width="1.8" fill="none"/><path d="M1,8 L8,15 L15,8" stroke="#4a8080" stroke-width="2" fill="none"/></svg>
<div style="position:absolute;left:1223px;top:563px;font:bold 15px 'Liberation Mono', monospace;color:#000;white-space:pre;line-height:1;">Max</div>
<div style="position:absolute;left:1200px;top:584px;width:99px;height:148px;background:#9edbda;"></div>
<div style="position:absolute;left:1281px;top:584px;width:3px;height:114px;background:#c8f8f4;"></div>
<div style="position:absolute;left:1284px;top:584px;width:15px;height:114px;background:#5a9a9a;"></div>
<div style="position:absolute;left:1298px;top:584px;width:1px;height:114px;background:#c8f8f4;"></div>
<svg style="position:absolute;left:1286px;top:585px" width="12" height="113"><polygon points="6,1 1,12 11,12" fill="#a8e4e4" stroke="#4a8a8a"/><polygon points="6,112 1,101 11,101" fill="#a8e4e4" stroke="#4a8a8a"/></svg>
<div style="position:absolute;left:1287px;top:598px;width:9px;height:85px;background:#9edbda;border:1px solid;border-color:#c8f8f4 #3a7a7a #3a7a7a #c8f8f4;"></div>
<div style="position:absolute;left:1200px;top:698px;width:99px;height:2px;background:#c8f8f4;"></div>
<div style="position:absolute;left:1204px;top:589px;width:72px;height:15px;background:#000;"></div>
<div style="position:absolute;left:1204px;top:591px;font:bold 14.5px 'Liberation Mono', monospace;color:#e8ffff;white-space:pre;line-height:1;">Spacing</div>
<div style="position:absolute;left:1199px;top:701px;width:28px;height:26px;background:#9edbda;border:2px solid;border-color:#c8f8f4 #5a9a9a #5a9a9a #c8f8f4;"></div>
<div style="position:absolute;left:1205px;top:705px;width:20px;height:20px;background:#a0dada;border:1px solid #000"></div>
<div style="position:absolute;left:1206px;top:706px;width:20px;height:9px;background:#c8f6f6;"></div>
<div style="position:absolute;left:1205px;top:705px;font:bold 11px 'Liberation Serif', serif;color:#000;white-space:pre;line-height:1;letter-spacing:-0.6px">DEL</div>
<div style="position:absolute;left:1212px;top:717px;width:6px;height:6px;border-radius:50%;background:#ee1010;border:1px solid #400"></div>
<div style="position:absolute;left:1235px;top:701px;width:26px;height:26px;background:#9edbda;border:2px solid;border-color:#c8f8f4 #5a9a9a #5a9a9a #c8f8f4;"></div>
<div style="position:absolute;left:1241px;top:705px;width:20px;height:20px;background:#a0dada;border:1px solid #000"></div>
<div style="position:absolute;left:1242px;top:706px;width:20px;height:9px;background:#c8f6f6;"></div>
<div style="position:absolute;left:1241px;top:705px;font:bold 11px 'Liberation Serif', serif;color:#000;white-space:pre;line-height:1;letter-spacing:-0.6px">REF</div>
<div style="position:absolute;left:1248px;top:717px;width:6px;height:6px;border-radius:50%;background:#10dd10;border:1px solid #400"></div>
<div style="position:absolute;left:1301px;top:446px;width:2px;height:288px;background:#4a6a6a;"></div>
<div style="position:absolute;left:1303px;top:446px;width:66px;height:288px;background:#000;"></div>
<div style="position:absolute;left:1305px;top:448px;width:64px;height:163px;background:#9edbda;"></div>
<div style="position:absolute;left:1350px;top:451px;width:19px;height:22px;background:#b2f6f6;border:1px solid #000;box-shadow:2px 2px 0 #6a8a8a"></div>
<div style="position:absolute;left:1352px;top:455px;font:bold italic 15px 'Liberation Mono', monospace;color:#000;white-space:pre;line-height:1;">Si</div>
<div style="position:absolute;left:1323px;top:475px;font:14.5px 'Liberation Mono', monospace;color:#000;white-space:pre;line-height:1;-webkit-text-stroke:0.3px #000">2.9</div>
<div style="position:absolute;left:1309px;top:489px;width:55px;height:123px;background:#ffff10;border:1px solid #000;box-sizing:border-box"></div>
<div style="position:absolute;left:1303px;top:612px;width:66px;height:4px;background:#000;"></div>
<div style="position:absolute;left:1305px;top:616px;width:64px;height:52px;background:#9edbda;"></div>
<div style="position:absolute;left:1309px;top:617px;width:56px;height:29px;background:#ffff10;border:1px solid #000;box-sizing:border-box"></div>
<div style="position:absolute;left:1317px;top:621px;font:14.5px 'Liberation Mono', monospace;color:#000;white-space:pre;line-height:1;-webkit-text-stroke:0.3px #000">2.9-</div>
<div style="position:absolute;left:1330px;top:634px;font:14.5px 'Liberation Mono', monospace;color:#000;white-space:pre;line-height:1;-webkit-text-stroke:0.3px #000">3</div>
<div style="position:absolute;left:1305px;top:654px;width:62px;height:11px;background:#9edbda;border:1px solid;border-color:#c8f8f4 #5a9a9a #5a9a9a #c8f8f4;"></div>
<svg style="position:absolute;left:1306px;top:654px" width="15" height="13"><polygon points="2,6.5 13,2 13,11" fill="#bdeeee" stroke="#6aaaaa"/></svg>
<div style="position:absolute;left:1305px;top:668px;width:64px;height:2px;background:#000;"></div>
<div style="position:absolute;left:1305px;top:670px;width:64px;height:62px;background:#9edbda;border-left:2px solid #000;box-sizing:border-box"></div>
<div style="position:absolute;left:1309px;top:675px;width:60px;height:14px;background:#000;"></div>
<div style="position:absolute;left:1310px;top:677px;font:bold 14.5px 'Liberation Mono', monospace;color:#e8ffff;white-space:pre;line-height:1;">Spacing</div>
<div style="position:absolute;left:1310px;top:693px;font:bold 14.5px 'Liberation Mono', monospace;color:#000;white-space:pre;line-height:1;">Pad</div>
<div style="position:absolute;left:1310px;top:711px;font:bold 14.5px 'Liberation Mono', monospace;color:#000;white-space:pre;line-height:1;">Clearance</div>
<div style="position:absolute;left:1198px;top:732px;width:171px;height:2px;background:#000;"></div>
<div style="position:absolute;left:1197px;top:742px;width:2px;height:164px;background:#2a7060;"></div>
<div style="position:absolute;left:1199px;top:742px;width:170px;height:164px;background:#000;"></div>
<div style="position:absolute;left:1200px;top:743px;width:169px;height:162px;background:#55cdab;"></div>
<div style="position:absolute;left:1311px;top:764px;width:58px;height:122px;background:#000;"></div>
<div style="position:absolute;left:1313px;top:766px;width:56px;height:118px;background:#9edbda;"></div>
<div style="position:absolute;left:1199px;top:906px;width:170px;height:2px;background:#c8f8f4;"></div>
<div style="position:absolute;left:1200px;top:910px;width:28px;height:6px;background:#9edbda;border:1px solid;border-color:#c8f8f4 #5a9a9a #5a9a9a #c8f8f4;"></div>
<div style="position:absolute;left:1234px;top:910px;width:28px;height:6px;background:#9edbda;border:1px solid;border-color:#c8f8f4 #5a9a9a #5a9a9a #c8f8f4;"></div>
<div style="position:absolute;left:1267px;top:908px;width:102px;height:9px;background:#9edbda;border-top:2px solid #000;border-left:2px solid #000;box-sizing:border-box"></div>
</body></html>
